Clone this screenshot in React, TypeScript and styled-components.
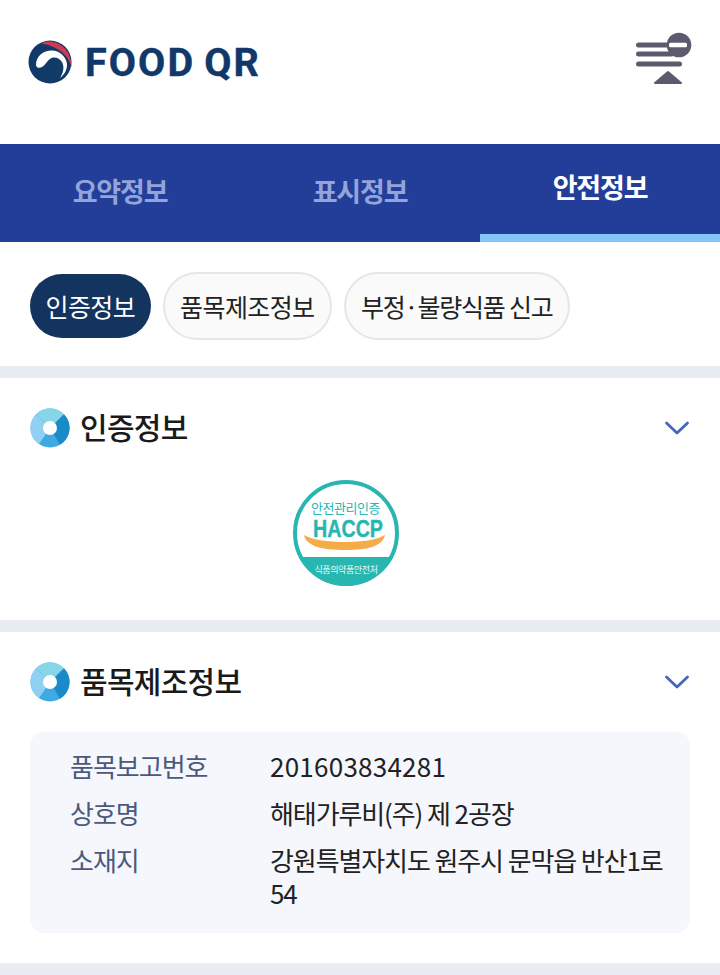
import React from 'react';
import styled, { createGlobalStyle } from 'styled-components';

const GlobalStyle = createGlobalStyle`
  html, body {
    margin: 0;
    padding: 0;
    background: #fff;
  }
  body {
    font-family: "Noto Sans CJK KR", "Liberation Sans", sans-serif;
    color: #222;
  }
  * {
    box-sizing: border-box;
  }
`;

const Logo: React.FC = () => (
  <svg width="44" height="44" viewBox="0 0 44 44">
    <circle cx="22" cy="22" r="21.500" fill="#123a68" />
    <path d="M8 25C8 16 15 10.500 24 10.500C31 10.500 38 16 39 24C39.300 29 37 34 32 38C35 33 36.500 28 34.500 23C32.500 18.500 27.500 16.500 23.500 18C19 20 18 25 14 27C11.500 28.500 8.500 28 8 25Z" fill="#fff" />
    <path d="M13 3.200C27 -3 44 8 43.500 27C41 19 36 8 13 3.200Z" fill="#cf3a52" />
  </svg>
);

const MenuIcon: React.FC = () => (
  <svg width="60" height="60" viewBox="0 0 60 60">
    <rect x="2" y="14.500" width="38" height="5" rx="2.500" fill="#5c5b6e" />
    <rect x="2" y="23.500" width="38" height="5" rx="2.500" fill="#5c5b6e" />
    <rect x="2" y="33.500" width="46" height="5" rx="2.500" fill="#5c5b6e" />
    <circle cx="45" cy="17" r="12.300" fill="#5c5b6e" />
    <rect x="35" y="14.800" width="18" height="4.500" rx="1.500" fill="#fff" />
    <path d="M34 44 L47 55 H21 Z" fill="#5c5b6e" stroke="#5c5b6e" strokeWidth="2" strokeLinejoin="round" />
  </svg>
);

const Bullet: React.FC = () => (
  <BulletSvg width="40" height="40" viewBox="0 0 40 40">
    <circle cx="20" cy="20" r="19.500" fill="#3fa9e2" />
    <path d="M20 20 L6 6.300 A19.500 19.500 0 0 1 34 6.300 Z" fill="#86d6e8" />
    <path d="M20 20 L34 6.300 A19.500 19.500 0 0 1 30 36.700 Z" fill="#1b8ac8" />
    <path d="M20 20 L9 36.100 A19.500 19.500 0 0 1 6 6.300 Z" fill="#8fd0f3" />
    <circle cx="20" cy="20" r="7" fill="#fff" />
  </BulletSvg>
);

const Chevron: React.FC = () => (
  <svg width="26" height="16" viewBox="0 0 26 16">
    <path d="M2.500 3 L13 13 L23.500 3" fill="none" stroke="#4466bb" strokeWidth="2.800" strokeLinecap="round" strokeLinejoin="round" />
  </svg>
);

const HaccpMark: React.FC = () => (
  <svg width="108" height="108" viewBox="0 0 108 108">
    <defs>
      <clipPath id="haccp-clip">
        <circle cx="54" cy="54" r="53" />
      </clipPath>
    </defs>
    <circle cx="54" cy="54" r="53" fill="#fff" />
    <rect x="0" y="78" width="108" height="30" fill="#28b6b0" clipPath="url(#haccp-clip)" />
    <circle cx="54" cy="54" r="51" fill="none" stroke="#28b6b0" strokeWidth="4" />
    <text x="53.500" y="34" textAnchor="middle" fontSize="13" letterSpacing="-0.500" fill="#28b6b0" fontFamily='"Noto Sans CJK KR", sans-serif'>안전관리인증</text>
    <text x="56" y="58" textAnchor="middle" fontSize="23" fontWeight="700" textLength="70" lengthAdjust="spacingAndGlyphs" fill="#28b6b0" stroke="#28b6b0" strokeWidth="0.400" fontFamily='"Liberation Sans", sans-serif'>HACCP</text>
    <path d="M12 56 C14 67 30 71 53 71 C76 71 91 67 93 56 C84 61 70 63 53 63 C36 63 21 61 12 56 Z" fill="#f5ac47" />
    <text x="54" y="94" textAnchor="middle" fontSize="9" letterSpacing="-0.400" fill="#e8f8f6" fontFamily='"Noto Sans CJK KR", sans-serif'>식품의약품안전처</text>
  </svg>
);

const tabs = [
  { label: '요약정보', active: false },
  { label: '표시정보', active: false },
  { label: '안전정보', active: true },
];

const infoRows = [
  { label: '품목보고번호', value: '201603834281', numeric: true },
  { label: '상호명', value: '해태가루비(주) 제 2공장', numeric: false },
  { label: '소재지', value: '강원특별자치도 원주시 문막읍 반산1로 54', numeric: false },
];

const App: React.FC = () => {
  return (
    <Page>
      <GlobalStyle />
      <Header>
        <Brand>
          <Logo />
          <BrandName>FOOD QR</BrandName>
        </Brand>
        <MenuIcon />
      </Header>
      <TabBar>
        {tabs.map((t) => (
          <Tab key={t.label} $active={t.active}>
            {t.label}
          </Tab>
        ))}
      </TabBar>
      <ChipRow>
        <Chip $active>인증정보</Chip>
        <Chip>품목제조정보</Chip>
        <Chip $tight>부정·불량식품 신고</Chip>
      </ChipRow>
      <Section>
        <SectionHead>
          <SectionTitleWrap>
            <Bullet />
            <SectionTitle>인증정보</SectionTitle>
          </SectionTitleWrap>
          <Chevron />
        </SectionHead>
        <CertBody>
          <HaccpMark />
        </CertBody>
      </Section>
      <Section>
        <SectionHead>
          <SectionTitleWrap>
            <Bullet />
            <SectionTitle>품목제조정보</SectionTitle>
          </SectionTitleWrap>
          <Chevron />
        </SectionHead>
        <InfoBox>
          {infoRows.map((r) => (
            <InfoRow key={r.label}>
              <InfoLabel>{r.label}</InfoLabel>
              <InfoValue $numeric={r.numeric}>{r.value}</InfoValue>
            </InfoRow>
          ))}
        </InfoBox>
      </Section>
    </Page>
  );
};

export default App;

const Page = styled.div`
  width: 720px;
  height: 975px;
  overflow: hidden;
  background: #e9ecf2;
`;

const Header = styled.header`
  height: 144px;
  background: #fff;
  display: flex;
  align-items: flex-start;
  justify-content: space-between;
  padding: 28px 26px 0 28px;
`;

const Brand = styled.div`
  display: flex;
  align-items: center;
  gap: 13px;
  height: 44px;
  margin-top: 12px;
`;

const BrandName = styled.span`
  font-family: "Roboto", "Liberation Sans", sans-serif;
  font-weight: 700;
  font-size: 39.5px;
  letter-spacing: 2.1px;
  word-spacing: -3px;
  color: #12386a;
  -webkit-text-stroke: 0.4px #12386a;
`;

const TabBar = styled.nav`
  height: 98px;
  background: #233e99;
  display: grid;
  grid-template-columns: repeat(3, 1fr);
`;

const Tab = styled.div<{ $active: boolean }>`
  display: flex;
  align-items: center;
  justify-content: center;
  font-size: 27px;
  font-weight: 700;
  letter-spacing: -1.2px;
  color: ${(p) => (p.$active ? '#fff' : '#93a4d8')};
  padding-bottom: ${(p) => (p.$active ? '6px' : '5px')};
  border-bottom: ${(p) => (p.$active ? '8px solid #83c7f7' : 'none')};
`;

const ChipRow = styled.div`
  height: 124px;
  background: #fff;
  display: flex;
  align-items: center;
  gap: 12px;
  padding: 4px 30px 0;
  margin-bottom: 12px;
`;

const Chip = styled.div<{ $active?: boolean; $tight?: boolean }>`
  height: ${(p) => (p.$active ? '64px' : '68px')};
  display: flex;
  align-items: center;
  justify-content: center;
  padding: 0 ${(p) => (p.$tight ? '15px' : '15.5px')};
  border-radius: 34px;
  font-size: 25px;
  letter-spacing: ${(p) => (p.$tight ? '-1.2px' : '-0.6px')};
  white-space: pre;
  color: ${(p) => (p.$active ? '#fff' : '#222')};
  background: ${(p) => (p.$active ? '#12345f' : '#fafafa')};
  border: ${(p) => (p.$active ? 'none' : '2px solid #e6e6e6')};
`;

const Section = styled.section`
  display: flow-root;
  background: #fff;
  padding: 0 30px;
  margin-bottom: 12px;
`;

const SectionHead = styled.div`
  height: 100px;
  display: flex;
  align-items: center;
  justify-content: space-between;
`;

const SectionTitleWrap = styled.div`
  display: flex;
  align-items: center;
  gap: 10px;
`;

const BulletSvg = styled.svg`
  filter: blur(0.6px);
`;

const SectionTitle = styled.h2`
  margin: 0;
  padding-bottom: 4px;
  font-size: 30px;
  font-weight: 500;
  letter-spacing: -0.7px;
  color: #1a1a1a;
`;

const CertBody = styled.div`
  height: 142px;
  display: flex;
  justify-content: center;
  padding: 1px 28px 0 0;
`;

const InfoBox = styled.div`
  background: #f5f7fc;
  border-radius: 14px;
  padding: 17px 20px 24px 40px;
  display: flex;
  flex-direction: column;
  gap: 14px;
  margin-bottom: 30px;
`;

const InfoRow = styled.div`
  display: grid;
  grid-template-columns: 200px 1fr;
  font-size: 26px;
  line-height: 33px;
`;

const InfoLabel = styled.div`
  color: #4b5a7c;
  letter-spacing: -1px;
`;

const InfoValue = styled.div<{ $numeric: boolean }>`
  color: #222;
  word-break: keep-all;
  letter-spacing: ${(p) => (p.$numeric ? '0.25px' : '-1.1px')};
`;
